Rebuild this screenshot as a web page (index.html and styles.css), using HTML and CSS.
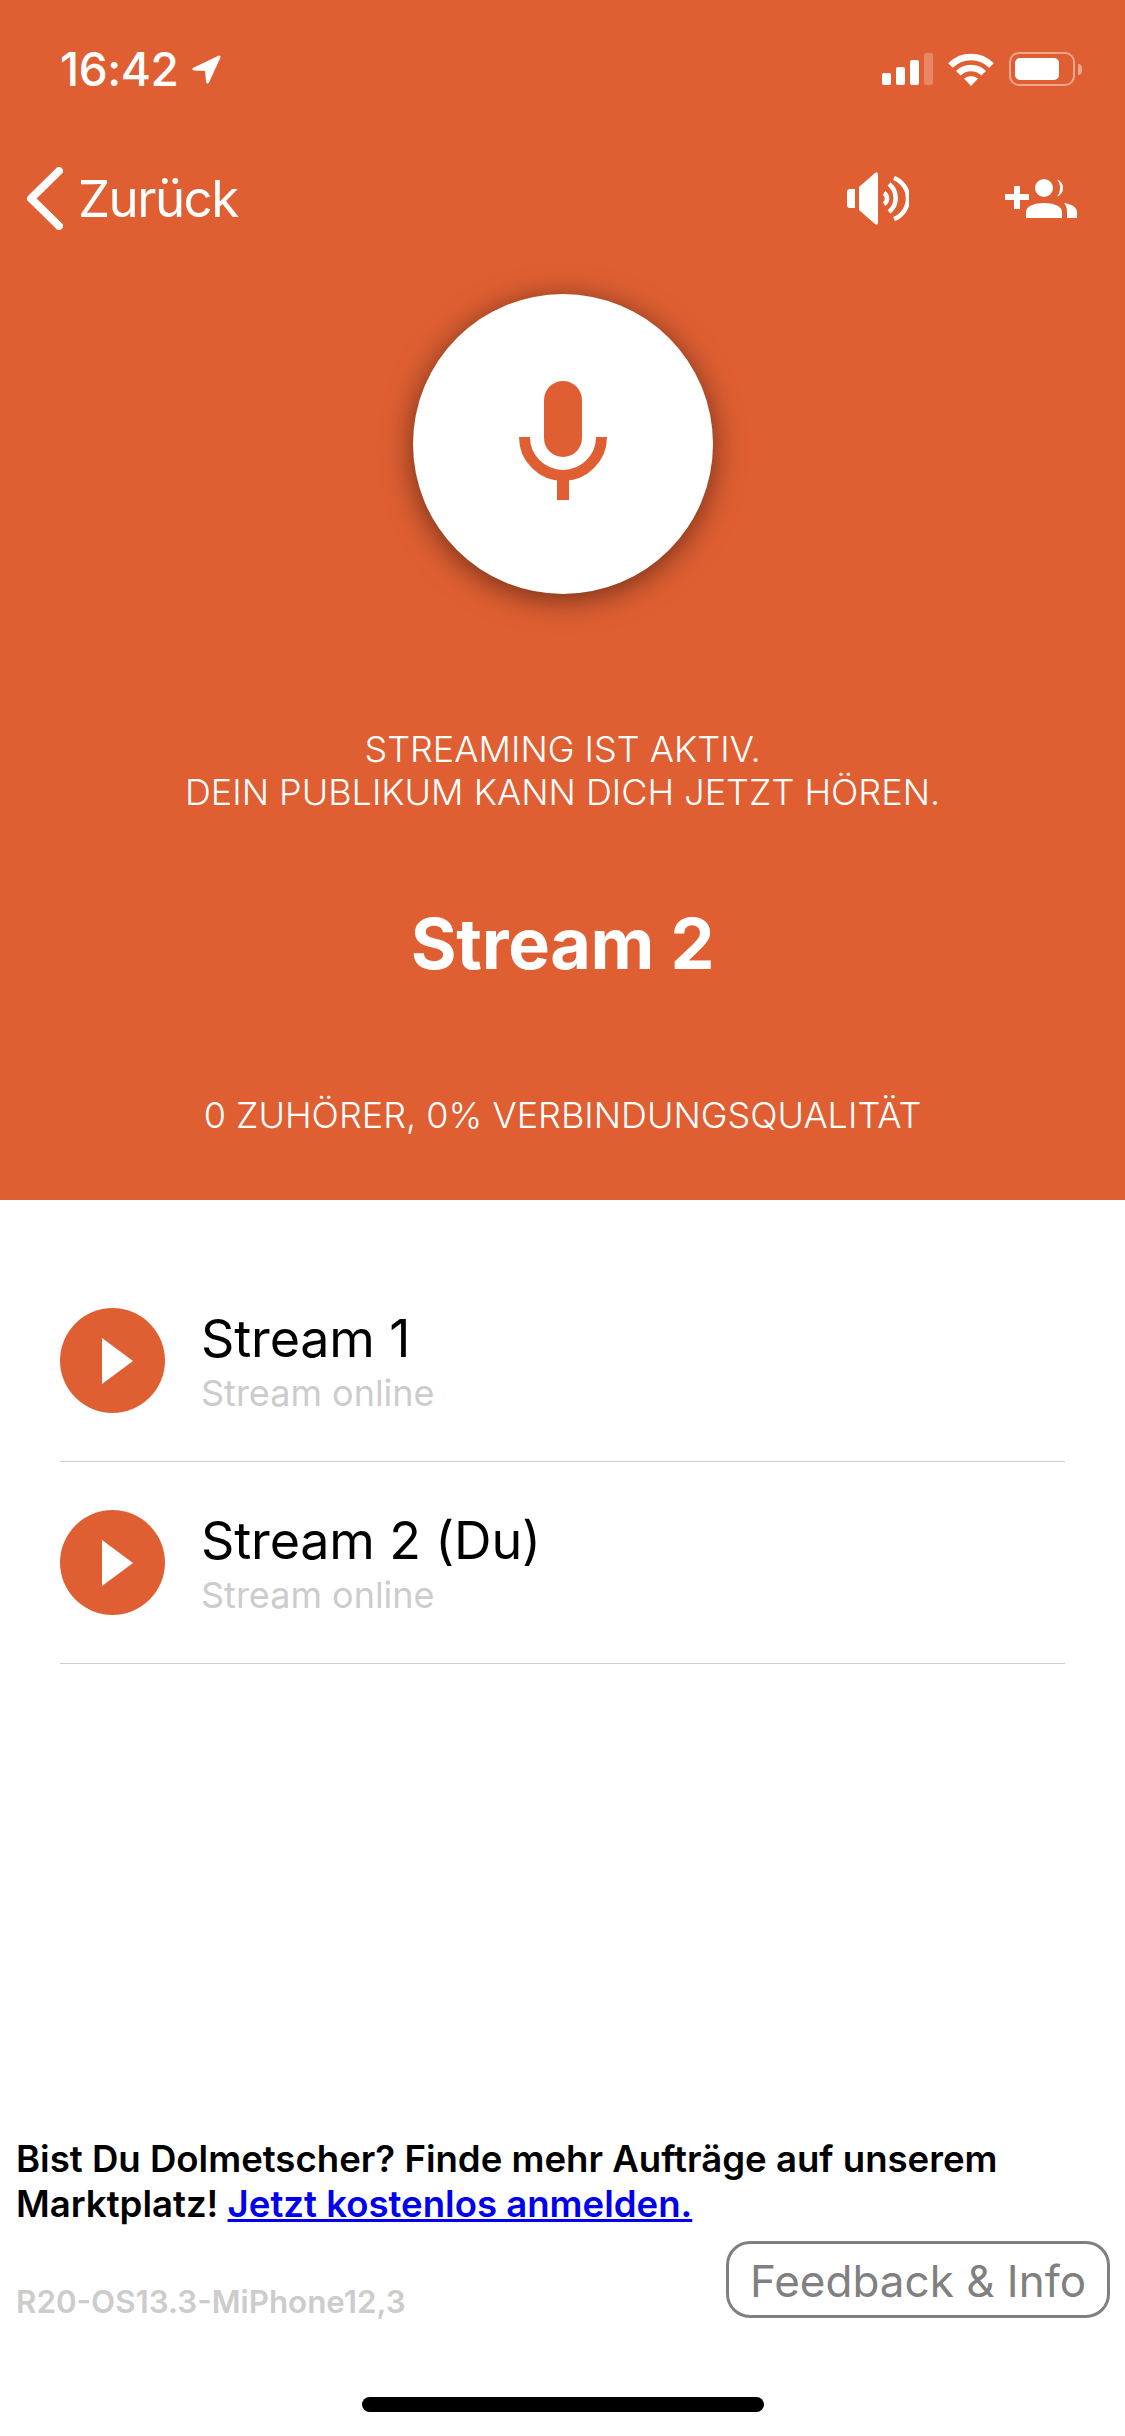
FILE: index.html
```html
<!DOCTYPE html>
<html lang="de">
<head>
    <meta charset="UTF-8">
    <meta name="viewport" content="width=device-width, initial-scale=1.0">
    <title>Stream 2</title>
    <link rel="stylesheet" href="styles.css">
</head>
<body>
    <div class="hero">
        <div class="status-bar">
            <div class="status-left">
                <span class="time">16:42</span>
                <svg class="icon-location" width="29" height="29" viewBox="0 0 29 29">
                    <path d="M27 2 2 14 14.500 14.500 15.500 27Z" fill="#fff" stroke="#fff" stroke-width="3" stroke-linejoin="round"/>
                </svg>
            </div>
            <div class="status-right">
                <div class="signal">
                    <span class="bar bar-1"></span>
                    <span class="bar bar-2"></span>
                    <span class="bar bar-3"></span>
                    <span class="bar bar-4"></span>
                </div>
                <svg width="46" height="33" viewBox="0 0 46 33" fill="none" stroke="#fff" stroke-width="6.500">
                    <path d="M2.500 12.500A29 29 0 0 1 43.500 12.500"/>
                    <path d="M10.300 20.300A18 18 0 0 1 35.700 20.300"/>
                    <path d="M23 33 16 25.500Q23 20.500 30 25.500Z" fill="#fff" stroke="none"/>
                </svg>
                <div class="battery">
                    <div class="battery-body"><div class="battery-fill"></div></div>
                    <div class="battery-cap"></div>
                </div>
            </div>
        </div>

        <div class="nav">
            <div class="back">
                <svg width="37" height="63" viewBox="0 0 37 63" fill="none" stroke="#fff" stroke-width="8" stroke-linecap="round" stroke-linejoin="round">
                    <path d="M33 4 5 31.500 33 59"/>
                </svg>
                <span>Zurück</span>
            </div>
            <div class="nav-actions">
                <svg width="62" height="53" viewBox="0 0 62 53">
                    <path d="M3 17H8V36H3Q0 36 0 33V20Q0 17 3 17Z" fill="#fff"/>
                    <path d="M12 15 28 1Q31 -1 31 3V50Q31 54 28 52L12 38Z" fill="#fff"/>
                    <g fill="none" stroke="#fff" stroke-width="4.500">
                        <path d="M37 21A6.500 6.500 0 0 1 37 32"/>
                        <path d="M42 12A18 18 0 0 1 42 40"/>
                        <path d="M47 6A22 22 0 0 1 47 47"/>
                    </g>
                </svg>
                <svg width="72" height="39" viewBox="0 0 72 39" fill="#fff">
                    <path d="M9 7H15V15H24V21H15V30H9V21H0V15H9Z"/>
                    <circle cx="39" cy="9" r="9"/>
                    <path d="M52 .5A9 9 0 0 1 52 17.500 13 13 0 0 0 52 .5Z"/>
                    <path d="M21 39V33C21 27 30 24 39 24 48 24 57 27 57 33V39Z"/>
                    <path d="M59 24C66 25 72 28 72 33V39H62V33C62 29 61 26 59 24Z"/>
                </svg>
            </div>
        </div>

        <div class="mic-button">
            <svg width="88" height="119" viewBox="0 0 88 119" fill="#df5f32">
                <rect x="25" y="0" width="38" height="76" rx="19"/>
                <path d="M5.500 56A38.500 38.500 0 0 0 82.500 56" fill="none" stroke="#df5f32" stroke-width="11"/>
                <rect x="38" y="96" width="12" height="23"/>
            </svg>
        </div>

        <p class="stream-note">STREAMING IST AKTIV.<br>DEIN PUBLIKUM KANN DICH JETZT HÖREN.</p>
        <h1 class="stream-title">Stream 2</h1>
        <p class="stream-stats">0 ZUHÖRER, 0% VERBINDUNGSQUALITÄT</p>
    </div>

    <div class="stream-list">
        <div class="stream-row">
            <div class="play-button"><span class="play-arrow"></span></div>
            <div class="stream-info">
                <div class="stream-name">Stream 1</div>
                <div class="stream-state">Stream online</div>
            </div>
        </div>
        <div class="stream-row">
            <div class="play-button"><span class="play-arrow"></span></div>
            <div class="stream-info">
                <div class="stream-name">Stream 2 (Du)</div>
                <div class="stream-state">Stream online</div>
            </div>
        </div>
    </div>

    <div class="footer">
        <p class="promo">Bist Du Dolmetscher? Finde mehr Aufträge auf unserem<br>Marktplatz! <a href="#">Jetzt kostenlos anmelden.</a></p>
        <div class="meta">
            <span class="version">R20-OS13.3-MiPhone12,3</span>
            <button class="feedback">Feedback &amp; Info</button>
        </div>
        <div class="home-bar"></div>
    </div>
</body>
</html>
```

FILE: styles.css
```css
body {
    margin: 0;
    width: 1125px;
    height: 2436px;
    display: flex;
    flex-direction: column;
    font-family: Inter, "Liberation Sans", sans-serif;
    background: #fff;
    color: #000;
    overflow: hidden;
}

.hero {
    height: 1200px;
    flex-shrink: 0;
    background-color: #df5f32;
    color: #fff;
    display: flex;
    flex-direction: column;
}

/* status bar */
.status-bar {
    height: 34px;
    margin-top: 52px;
    padding: 0 43px 0 60px;
    display: flex;
    justify-content: space-between;
    align-items: center;
}

.status-left {
    display: flex;
    align-items: center;
    gap: 13px;
}

.time {
    font-size: 46px;
    font-weight: 500;
    letter-spacing: -0.4px;
    line-height: 34px;
}

.status-right {
    display: flex;
    align-items: center;
    gap: 15px;
}

.signal {
    display: flex;
    align-items: flex-end;
    gap: 5px;
    height: 32px;
}

.bar {
    width: 9px;
    background: #fff;
    border-radius: 2px;
}

.bar-1 { height: 12px; }
.bar-2 { height: 18px; }
.bar-3 { height: 25px; }
.bar-4 { height: 32px; opacity: 0.25; }

.battery {
    display: flex;
    align-items: center;
    gap: 3px;
}

.battery-body {
    box-sizing: border-box;
    width: 66px;
    height: 34px;
    padding: 4px;
    border: 2px solid rgba(255, 255, 255, 0.45);
    border-radius: 10px;
}

.battery-fill {
    width: 44px;
    height: 22px;
    background: #fff;
    border-radius: 5px;
}

.battery-cap {
    width: 4px;
    height: 11px;
    background: rgba(255, 255, 255, 0.45);
    border-radius: 0 4px 4px 0;
}

/* nav */
.nav {
    height: 64px;
    margin-top: 80px;
    padding: 0 48px 0 26px;
    display: flex;
    justify-content: space-between;
    align-items: center;
}

.back {
    display: flex;
    align-items: center;
    gap: 15px;
    font-size: 51px;
    letter-spacing: -1.5px;
}

.nav-actions {
    display: flex;
    align-items: center;
    gap: 96px;
}

/* mic */
.mic-button {
    box-sizing: border-box;
    width: 300px;
    height: 300px;
    margin: 64px auto 0;
    padding-bottom: 7px;
    background: #fff;
    border-radius: 50%;
    box-shadow: 0 5px 30px rgba(0, 0, 0, 0.5);
    display: flex;
    justify-content: center;
    align-items: center;
}

.stream-note, .stream-stats {
    margin: 0;
    text-align: center;
    font-size: 36px;
    font-weight: 300;
    line-height: 43px;
}

.stream-note {
    margin-top: 134px;
}

.stream-title {
    margin: 90px 0 0;
    text-align: center;
    font-size: 70px;
    font-weight: 700;
    letter-spacing: -0.3px;
    line-height: 80px;
}

.stream-stats {
    margin-top: 110px;
}

/* list */
.stream-list {
    margin-top: 60px;
    padding: 0 60px;
}

.stream-row {
    box-sizing: border-box;
    height: 202px;
    border-bottom: 1px solid #ccc;
    display: flex;
    align-items: center;
    gap: 36px;
}

.play-button {
    width: 105px;
    height: 105px;
    background-color: #df5f32;
    border-radius: 50%;
    display: flex;
    justify-content: center;
    align-items: center;
}

.play-arrow {
    width: 0;
    height: 0;
    margin-left: 10px;
    border-style: solid;
    border-width: 23.500px 0 23.500px 31px;
    border-color: transparent transparent transparent #fff;
}

.stream-info {
    padding-top: 1px;
}

.stream-name {
    font-size: 52px;
    letter-spacing: -0.15px;
    line-height: 64px;
}

.stream-state {
    font-size: 36px;
    line-height: 44px;
    color: #ccc;
}

/* footer */
.footer {
    margin-top: auto;
    display: flex;
    flex-direction: column;
}

.promo {
    margin: 0;
    padding: 0 16px;
    font-size: 36.600px;
    font-weight: 600;
    line-height: 45px;
}

.promo a {
    color: #0000ee;
}

.meta {
    padding: 0 15px 0 16px;
    margin-top: 14px;
    display: flex;
    justify-content: space-between;
    align-items: flex-end;
}

.version {
    margin-bottom: 1px;
    font-size: 31.300px;
    font-weight: 600;
    line-height: 30px;
    color: #ccc;
}

.feedback {
    box-sizing: border-box;
    width: 384px;
    height: 77px;
    padding: 2px 0 0;
    background: #fff;
    border: 3px solid #808080;
    border-radius: 24px;
    color: #808080;
    font-family: inherit;
    font-size: 44px;
}

.home-bar {
    width: 402px;
    height: 15px;
    margin: 79px auto 24px;
    background: #000;
    border-radius: 8px;
}
```
